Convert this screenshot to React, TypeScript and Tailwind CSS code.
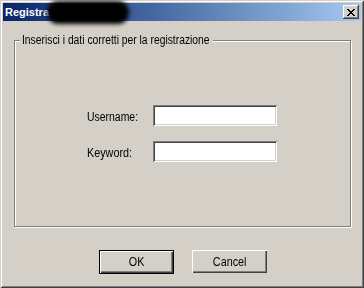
export default function App() {
  return (
    <div className="w-[364px] h-[288px] bg-[#D4D0C8] p-[3px] flex flex-col shadow-[inset_1px_1px_0_#D4D0C8,inset_-1px_-1px_0_#404040,inset_2px_2px_0_#fff,inset_-2px_-2px_0_#808080] font-['Liberation_Sans',Arial,sans-serif] text-[12px] text-black overflow-hidden">
      {/* Title bar */}
      <div className="h-[18px] flex items-center bg-gradient-to-r from-[#0A246A] to-[#A6CAF0] pl-[2px] pr-[2px]">
        <span className="text-white font-bold text-[11px] leading-none">Registra</span>
        <span className="inline-block w-[82px] h-[23px] -my-[3px] -ml-[2px] rounded-full bg-black blur-[2px]" />
        <div className="flex-1" />
        <button className="w-[16px] h-[14px] bg-[#D4D0C8] flex items-center justify-center shadow-[inset_-1px_-1px_0_#404040,inset_1px_1px_0_#fff,inset_-2px_-2px_0_#808080]">
          <svg width="8" height="7" viewBox="0 0 8 7" shapeRendering="crispEdges">
            <path d="M0 0h2v1H0zM6 0h2v1H6zM1 1h2v1H1zM5 1h2v1H5zM2 2h4v1H2zM3 3h2v1H3zM2 4h4v1H2zM1 5h2v1H1zM5 5h2v1H5zM0 6h2v1H0zM6 6h2v1H6z" fill="#000" />
          </svg>
        </button>
      </div>

      {/* Group box */}
      <div className="relative mt-[19px] ml-[11px] w-[337px] h-[187px] border border-[#808080] shadow-[1px_1px_0_#fff,inset_1px_1px_0_#fff]">
        <span className="absolute -top-[8px] left-[5px] w-[193px] bg-[#D4D0C8] pl-[2px] leading-[14px] whitespace-nowrap">
          <span className="inline-block origin-left scale-x-[0.86]">Inserisci i dati corretti per la registrazione</span>
        </span>
        <div className="pt-[64px] pl-[72px] flex flex-col gap-[15px]">
          <div className="flex items-center">
            <span className="w-[66px] pt-[2px] whitespace-nowrap">
              <span className="inline-block origin-left scale-x-[0.87]">Username:</span>
            </span>
            <input className="w-[124px] h-[21px] bg-white outline-none px-[3px] shadow-[inset_1px_1px_0_#808080,inset_-1px_-1px_0_#fff,inset_2px_2px_0_#404040,inset_-2px_-2px_0_#D4D0C8]" />
          </div>
          <div className="flex items-center">
            <span className="w-[66px] pt-[2px] whitespace-nowrap">
              <span className="inline-block origin-left scale-x-[0.9]">Keyword:</span>
            </span>
            <input className="w-[124px] h-[21px] bg-white outline-none px-[3px] shadow-[inset_1px_1px_0_#808080,inset_-1px_-1px_0_#fff,inset_2px_2px_0_#404040,inset_-2px_-2px_0_#D4D0C8]" />
          </div>
        </div>
      </div>

      {/* Buttons */}
      <div className="mt-[23px] pl-[96px] flex gap-[18px]">
        <button className="w-[75px] h-[24px] bg-[#D4D0C8] border border-black shadow-[inset_1px_1px_0_#fff,inset_-1px_-1px_0_#404040,inset_-2px_-2px_0_#808080]">
          <span className="inline-block scale-x-[0.9]">OK</span>
        </button>
        <button className="w-[75px] h-[23px] bg-[#D4D0C8] shadow-[inset_1px_1px_0_#fff,inset_-1px_-1px_0_#404040,inset_-2px_-2px_0_#808080]">
          <span className="inline-block scale-x-[0.9]">Cancel</span>
        </button>
      </div>
    </div>
  );
}
